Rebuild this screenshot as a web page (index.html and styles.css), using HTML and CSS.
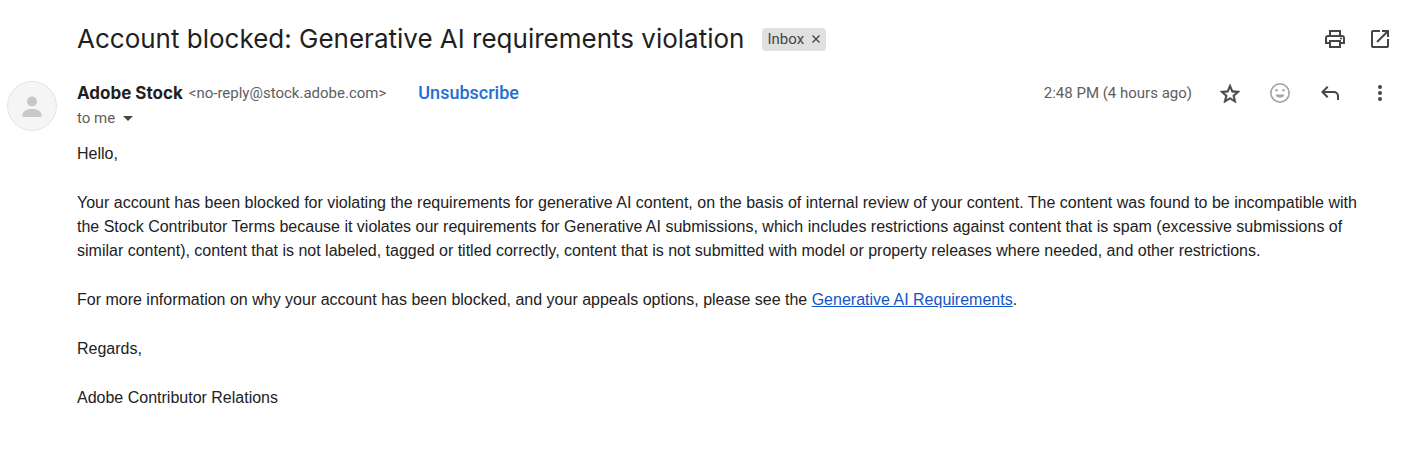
FILE: index.html
```html
<!DOCTYPE html>
<html lang="en">
<head>
    <meta charset="UTF-8">
    <meta name="viewport" content="width=device-width, initial-scale=1.0">
    <title>Account blocked: Generative AI requirements violation</title>
    <link rel="stylesheet" href="styles.css">
</head>
<body>
    <main class="message">
        <header class="subject-row">
            <h1>Account blocked: Generative AI requirements violation</h1>
            <button class="label" type="button" aria-label="Remove label Inbox">Inbox
                <svg width="8" height="8" viewBox="0 0 8 8"><path d="M.5.5l7 7M7.5.5l-7 7" fill="none" stroke="#444746" stroke-width="1.3"/></svg>
            </button>
            <div class="tools">
                <button type="button" aria-label="Print all">
                    <svg viewBox="0 0 24 24"><path d="M16 8V5H8v3H6V3h12v5h-2zM4 10h16H4zm14 2.5q.43 0 .71-.29.29-.28.29-.71t-.29-.71q-.28-.29-.71-.29t-.71.29q-.29.28-.29.71t.29.71q.28.29.71.29zM16 19v-4H8v4h8zm2 2H6v-4H2v-6q0-1.28.88-2.14Q3.75 8 5 8h14q1.280 0 2.140.86.86.86.86 2.140v6h-4v4zm2-6v-4q0-.43-.29-.71Q19.430 10 19 10H5q-.43 0-.71.29Q4 10.570 4 11v4h2v-2h12v2h2z"/></svg>
                </button>
                <button type="button" aria-label="In new window">
                    <svg viewBox="0 0 24 24"><path d="M5 21q-.82 0-1.410-.59Q3 19.820 3 19V5q0-.82.59-1.410Q4.180 3 5 3h7v2H5v14h14v-7h2v7q0 .82-.59 1.410-.59.59-1.410.59H5zm4.700-5.300l-1.400-1.400L17.600 5H14V3h7v7h-2V6.400l-9.300 9.300z"/></svg>
                </button>
            </div>
        </header>

        <div class="sender-row">
            <svg class="avatar" viewBox="0 0 50 50">
                <circle cx="25" cy="25" r="24.500" fill="#f5f5f5" stroke="#e3e3e3"/>
                <circle cx="25" cy="20.500" r="5" fill="#c8c8c8"/>
                <path d="M15.500 36v-2.500c0-3.500 5.500-5.500 9.500-5.500s9.500 2 9.500 5.500V36z" fill="#c8c8c8"/>
            </svg>
            <div class="sender">
                <div class="from">
                    <span class="name">Adobe Stock</span>
                    <span class="email">&lt;no-reply@stock.adobe.com&gt;</span>
                    <a class="unsubscribe" href="#">Unsubscribe</a>
                </div>
                <button class="recipient" type="button">to me
                    <svg width="10" height="5" viewBox="0 0 10 5"><path d="M0 0h10L5 5z"/></svg>
                </button>
            </div>
            <div class="actions">
                <time>2:48 PM (4 hours ago)</time>
                <button type="button" aria-label="Star">
                    <svg viewBox="0 0 24 24"><path stroke="#444746" stroke-width=".5" d="M22 10.240l-7.190-.62L12 3 9.190 9.630 2 10.240l5.460 4.730L5.820 22 12 18.270 18.180 22l-1.630-7.030L22 10.240zM12 16.400l-3.760 2.270 1-4.280-3.320-2.880 4.380-.38L12 7.100l1.710 4.040 4.380.38-3.320 2.880 1 4.280L12 16.400z"/></svg>
                </button>
                <button class="muted" type="button" aria-label="Add reaction">
                    <svg viewBox="0 0 24 24"><path fill-rule="evenodd" d="M12 2a10 10 0 1 0 0 20 10 10 0 0 0 0-20zm0 1.700a8.300 8.300 0 1 1 0 16.600 8.300 8.300 0 0 1 0-16.600zM8.500 8a1.300 1.300 0 1 0 0 2.600 1.300 1.300 0 0 0 0-2.600zm7 0a1.300 1.300 0 1 0 0 2.600 1.300 1.300 0 0 0 0-2.600zM7.500 13.500h9c-.7 2.100-2.400 3.200-4.500 3.200s-3.800-1.100-4.500-3.200z"/></svg>
                </button>
                <button type="button" aria-label="Reply">
                    <svg viewBox="0 0 24 24"><path d="M19 19v-4q0-1.250-.88-2.130Q17.250 12 16 12H6.830l3.600 3.600L9 17l-6-6 6-6 1.430 1.400-3.600 3.600H16q2.080 0 3.540 1.460Q21 12.930 21 15v4h-2z"/></svg>
                </button>
                <button type="button" aria-label="More">
                    <svg viewBox="0 0 24 24"><circle cx="12" cy="6" r="2"/><circle cx="12" cy="12" r="2"/><circle cx="12" cy="18" r="2"/></svg>
                </button>
            </div>
        </div>

        <div class="body">
            <p>Hello,</p>
            <p>Your account has been blocked for violating the requirements for generative AI content, on the basis of internal review of your content. The content was found to be incompatible with the Stock Contributor Terms because it violates our requirements for Generative AI submissions, which includes restrictions against content that is spam (excessive submissions of similar content), content that is not labeled, tagged or titled correctly, content that is not submitted with model or property releases where needed, and other restrictions.</p>
            <p>For more information on why your account has been blocked, and your appeals options, please see the <a href="#">Generative AI Requirements</a>.</p>
            <p>Regards,</p>
            <p>Adobe Contributor Relations</p>
        </div>
    </main>
</body>
</html>
```

FILE: styles.css
```css
* {
    box-sizing: border-box;
}

body {
    margin: 0;
    background-color: #fff;
    color: #1f1f1f;
    font-family: Roboto, "Liberation Sans", sans-serif;
    font-size: 15px;
}

button {
    display: flex;
    align-items: center;
    padding: 0;
    border: none;
    background: none;
    color: inherit;
    font: inherit;
    cursor: pointer;
}

svg {
    display: block;
    fill: #444746;
}

.message {
    padding: 20px 24px 20px 7px;
}

.subject-row {
    display: flex;
    align-items: center;
    padding-left: 70px;
}

h1 {
    margin: 0;
    font-family: Inter, sans-serif;
    font-size: 26px;
    font-weight: 400;
    line-height: 38px;
}

.label {
    gap: 8px;
    height: 23px;
    margin-left: 18px;
    padding: 0 6px 0 5px;
    border-radius: 4px;
    background-color: #e0e0e0;
    color: #444746;
}

.tools {
    display: flex;
    gap: 21px;
    margin-left: auto;
}

.tools svg,
.actions svg {
    width: 24px;
    height: 24px;
}

.sender-row {
    display: flex;
    align-items: flex-start;
    margin-top: 23px;
}

.avatar {
    width: 50px;
    height: 50px;
    flex: none;
}

.sender {
    flex: 1;
    margin-left: 20px;
}

.from {
    display: flex;
    align-items: center;
    line-height: 24px;
}

.name {
    font-family: Inter, sans-serif;
    font-size: 17px;
    font-weight: 700;
}

.email {
    margin-left: 6px;
    color: #5e5e5e;
}

.unsubscribe {
    margin-left: 32px;
    color: #1f6fd0;
    font-size: 18px;
    font-weight: 500;
    text-decoration: none;
}

.recipient {
    gap: 8px;
    color: #5e5e5e;
    line-height: 26px;
}

.actions {
    display: flex;
    align-items: center;
    gap: 26px;
    color: #5e5e5e;
}

.muted svg {
    fill: #a6a6a6;
}

.body {
    padding: 11px 12px 0 70px;
    color: #222;
    font-family: "Liberation Sans", Arial, sans-serif;
    font-size: 16px;
    line-height: 24px;
}

.body p {
    margin: 0 0 25px;
}

.body a {
    color: #1155cc;
}
```
